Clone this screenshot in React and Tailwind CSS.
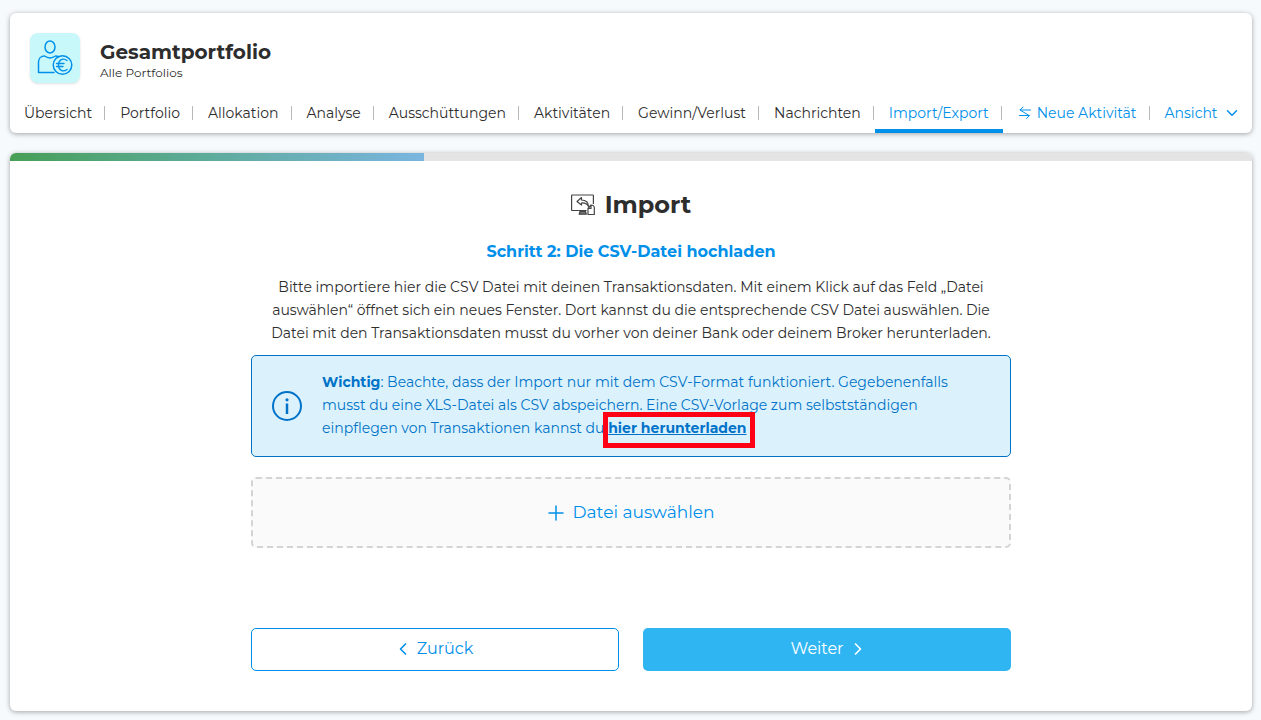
import React, { useState } from 'react';
import { ChevronDown, ChevronLeft, ChevronRight, Plus } from 'lucide-react';

const tabs = [
    'Übersicht',
    'Portfolio',
    'Allokation',
    'Analyse',
    'Ausschüttungen',
    'Aktivitäten',
    'Gewinn/Verlust',
    'Nachrichten',
    'Import/Export',
];

const PortfolioIcon = () => (
    <svg viewBox="0 0 50 50" className="size-full" fill="none" stroke="#0090ea" strokeWidth="1.5" strokeLinecap="round" strokeLinejoin="round">
        <ellipse cx="20" cy="14" rx="5" ry="6" />
        <path d="M24 39.500H8.500V29c0-3.500 2.500-6 6-6 3.500 2.500 7.500 2.500 11 0 1.300 0 2.400.3 3.300.9" />
        <circle cx="32.500" cy="32" r="9.300" />
        <path d="M37 27.500c-4-3-8.500-.8-8.500 4.500s4.500 7.500 8.500 4.500M26.500 30.500h7.500M26.500 33.500h6.500" strokeWidth="1.300" />
    </svg>
);

const ImportIcon = () => (
    <svg viewBox="0 0 24 22" className="h-[22px] w-6" fill="none" stroke="#444" strokeWidth="1.200" strokeLinejoin="round">
        <path d="M15.500 16.500H1.200A.6.6 0 0 1 .6 15.900V1.600A.6.6 0 0 1 1.200 1h20.600a.6.6 0 0 1 .6.6V10" />
        <path d="M10.500 3.500 6 7.500l4.500 3.500V9c3.500-.3 5.500.7 7 3.500 0-4-2.500-6.500-7-6.500z" />
        <path d="M9 17.500h5.500l.8 2.700H8.200z" fill="#777" />
        <path d="M17 14.500l3-3.500c2 0 3.300 1 3.300 3v6.500H17zM20 11v3.500h-3" />
    </svg>
);

const SwapIcon = () => (
    <svg viewBox="0 0 14 14" className="size-[14px]" fill="none" stroke="currentColor" strokeWidth="1" strokeLinecap="round" strokeLinejoin="round">
        <path d="M12.500 4H2l3-3M2 4l9 5.500M1.500 9.500H11.500l-3 3" />
    </svg>
);

const InfoIcon = () => (
    <svg viewBox="0 0 30 30" className="size-[30px] shrink-0" fill="none" stroke="#0073c8" strokeWidth="2">
        <circle cx="15" cy="15" r="14" />
        <path d="M15 12.500V23" strokeWidth="2.500" />
        <circle cx="15" cy="8.800" r="1.600" fill="#0073c8" stroke="none" />
    </svg>
);

const App = () => {
    const [activeTab, setActiveTab] = useState('Import/Export');

    return (
        <div className="min-h-screen bg-[#f6fafd] pt-[13px] pr-[9px] pb-[9px] pl-[10px] font-[Montserrat,Inter,sans-serif] text-[#2d2d2d]">
            {/* Header */}
            <header className="rounded-md bg-white pt-5 shadow-[0_1px_5px_rgba(0,0,0,0.35)]">
                <div className="flex items-center gap-5 px-5">
                    <div className="size-[50px] rounded-lg bg-[#c9f8fb] shadow-sm">
                        <PortfolioIcon />
                    </div>
                    <div className="pt-[6px]">
                        <h1 className="text-[20px] leading-6 font-bold">Gesamtportfolio</h1>
                        <p className="text-[12px] leading-[18px]">Alle Portfolios</p>
                    </div>
                </div>

                <nav className="mt-[10px] flex text-[14px]">
                    {tabs.map((tab) => (
                        <button
                            key={tab}
                            onClick={() => setActiveTab(tab)}
                            className={`flex h-10 items-center border-b-4 pt-1 pr-px pl-[14px] whitespace-nowrap ${activeTab === tab
                                    ? 'border-[#0090ea] text-[#0090ea]'
                                    : 'border-transparent'
                                }`}
                        >
                            <span className="pr-3">{tab}</span>
                            <span className="h-[14px] w-px bg-[#b8b8b8]" />
                        </button>
                    ))}
                    <button className="flex h-10 items-center border-b-4 border-transparent pt-1 pr-px pl-[15px] whitespace-nowrap text-[#0090ea]">
                        <span className="flex items-center gap-[5px] pr-3">
                            <SwapIcon />
                            Neue Aktivität
                        </span>
                        <span className="h-[14px] w-px bg-[#b8b8b8]" />
                    </button>
                    <button className="flex h-10 items-center gap-[5px] border-b-4 border-transparent pt-1 pl-[14px] whitespace-nowrap text-[#0090ea]">
                        Ansicht
                        <ChevronDown size={18} strokeWidth={2} />
                    </button>
                </nav>
            </header>

            {/* Import wizard */}
            <main className="mt-5 overflow-hidden rounded-md bg-white shadow-[0_1px_5px_rgba(0,0,0,0.35)]">
                <div className="h-2 bg-[#e4e4e4]">
                    <div className="h-full w-1/3 bg-linear-to-r from-[#479f56] to-[#7ab5e0]" />
                </div>

                <div className="mx-auto max-w-[760px] pt-[28px] pb-10">
                    <h2 className="flex items-center justify-center gap-[10px] text-[24px] leading-8 font-bold">
                        <ImportIcon />
                        Import
                    </h2>
                    <h3 className="mt-[19px] text-center text-[16px] leading-6 font-bold text-[#0090ea]">
                        Schritt 2: Die CSV-Datei hochladen
                    </h3>
                    <p className="mt-3 text-center text-[14px] leading-[23px]">
                        Bitte importiere hier die CSV Datei mit deinen Transaktionsdaten. Mit einem Klick auf das Feld „Datei
                        <br />
                        auswählen“ öffnet sich ein neues Fenster. Dort kannst du die entsprechende CSV Datei auswählen. Die
                        <br />
                        Datei mit den Transaktionsdaten musst du vorher von deiner Bank oder deinem Broker herunterladen.
                    </p>

                    <div className="mt-[10px] flex items-center gap-5 rounded-[5px] border border-[#0073c8] bg-[#dbf2fd] px-5 pt-[15px] pb-4 text-[#0073c8]">
                        <InfoIcon />
                        <p className="text-[14px] leading-[23px]">
                            <strong>Wichtig</strong>: Beachte, dass der Import nur mit dem CSV-Format funktioniert. Gegebenenfalls
                            <br />
                            musst du eine XLS-Datei als CSV abspeichern. Eine CSV-Vorlage zum selbstständigen
                            <br />
                            einpflegen von Transaktionen kannst du{' '}
                            <a href="#vorlage" className="relative font-bold underline">
                                hier herunterladen
                                <span className="absolute -top-[7px] -right-2 -bottom-[11px] -left-[5px] border-5 border-[#ff0015]" />
                            </a>
                        </p>
                    </div>

                    <button className="mt-5 flex h-[71px] w-full items-center justify-center gap-[5px] rounded-[5px] border-2 border-dashed border-[#d4d4d4] bg-[#fafafa] pr-1 text-[17px] text-[#0090ea]">
                        <Plus size={24} strokeWidth={1.5} />
                        Datei auswählen
                    </button>

                    <div className="mt-20 grid grid-cols-2 gap-6 text-[16px]">
                        <button className="flex h-[43px] items-center justify-center gap-1 rounded-[5px] border border-[#0090ea] pr-1 pb-[2px] text-[#0090ea]">
                            <ChevronLeft size={20} strokeWidth={2} />
                            Zurück
                        </button>
                        <button className="flex h-[43px] items-center justify-center gap-1 rounded-[5px] bg-[#30b5f3] pb-[2px] pl-1 text-white">
                            Weiter
                            <ChevronRight size={20} strokeWidth={2} />
                        </button>
                    </div>
                </div>
            </main>
        </div>
    );
};

export default App;
